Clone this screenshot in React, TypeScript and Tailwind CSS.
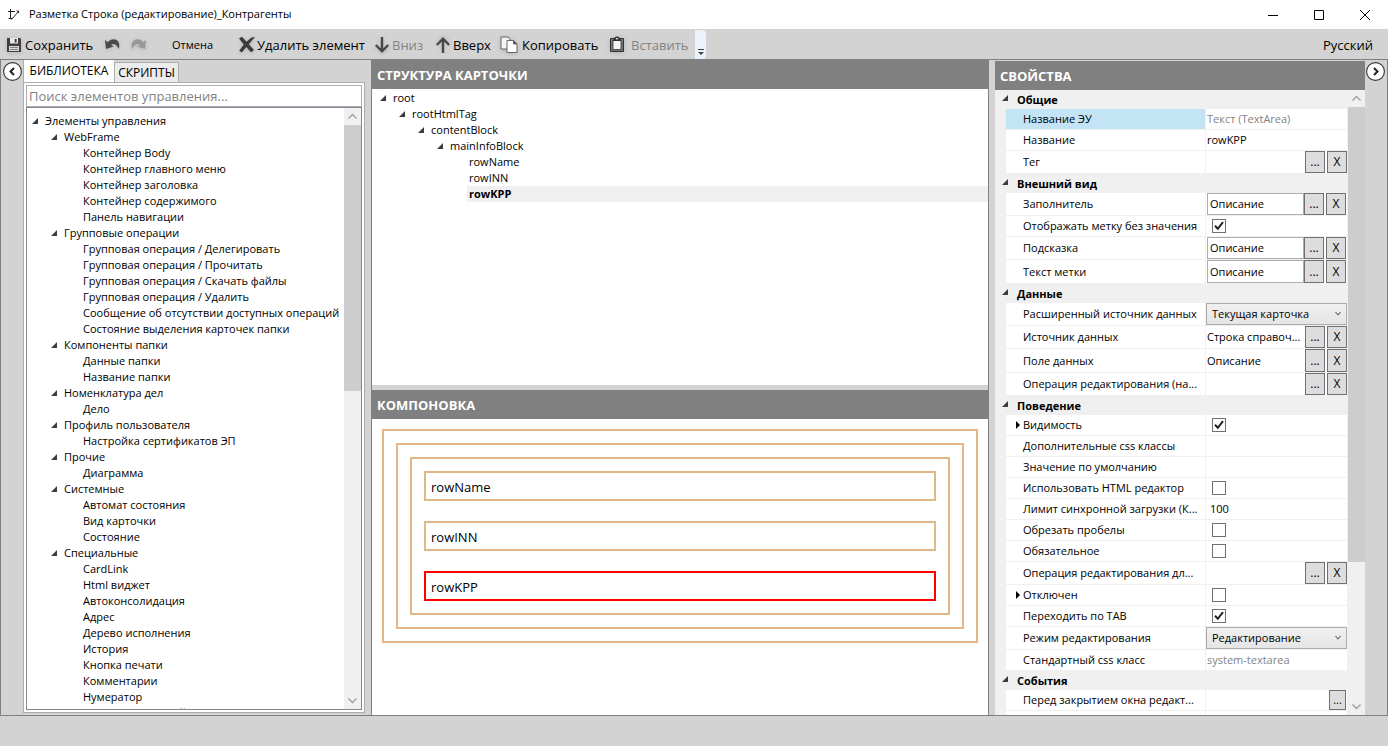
import React from 'react';

interface TreeItem {
  label: string;
  children?: TreeItem[];
  selected?: boolean;
}

type Kind = 'muted' | 'text' | 'number' | 'picker' | 'boxPicker' | 'check' | 'select' | 'event' | 'none';

interface Prop {
  label: string;
  kind: Kind;
  value?: string;
  checked?: boolean;
  active?: boolean;
  expandable?: boolean;
  size?: 'md' | 'lg' | 'xl';
}

const leafs = (...labels: string[]): TreeItem[] => labels.map((label) => ({ label }));

const library: TreeItem[] = [
  {
    label: 'Элементы управления',
    children: [
      {
        label: 'WebFrame',
        children: leafs('Контейнер Body', 'Контейнер главного меню', 'Контейнер заголовка', 'Контейнер содержимого', 'Панель навигации'),
      },
      {
        label: 'Групповые операции',
        children: leafs(
          'Групповая операция / Делегировать',
          'Групповая операция / Прочитать',
          'Групповая операция / Скачать файлы',
          'Групповая операция / Удалить',
          'Сообщение об отсутствии доступных операций',
          'Состояние выделения карточек папки',
        ),
      },
      { label: 'Компоненты папки', children: leafs('Данные папки', 'Название папки') },
      { label: 'Номенклатура дел', children: leafs('Дело') },
      { label: 'Профиль пользователя', children: leafs('Настройка сертификатов ЭП') },
      { label: 'Прочие', children: leafs('Диаграмма') },
      { label: 'Системные', children: leafs('Автомат состояния', 'Вид карточки', 'Состояние') },
      {
        label: 'Специальные',
        children: leafs(
          'CardLink',
          'Html виджет',
          'Автоконсолидация',
          'Адрес',
          'Дерево исполнения',
          'История',
          'Кнопка печати',
          'Комментарии',
          'Нумератор',
          'Предпросмотр файла',
        ),
      },
    ],
  },
];

const structure: TreeItem[] = [
  {
    label: 'root',
    children: [
      {
        label: 'rootHtmlTag',
        children: [
          {
            label: 'contentBlock',
            children: [
              {
                label: 'mainInfoBlock',
                children: [{ label: 'rowName' }, { label: 'rowINN' }, { label: 'rowKPP', selected: true }],
              },
            ],
          },
        ],
      },
    ],
  },
];

const groups: { title: string; props: Prop[] }[] = [
  {
    title: 'Общие',
    props: [
      { label: 'Название ЭУ', kind: 'muted', value: 'Текст (TextArea)', active: true },
      { label: 'Название', kind: 'text', value: 'rowKPP' },
      { label: 'Тег', kind: 'picker', size: 'lg' },
    ],
  },
  {
    title: 'Внешний вид',
    props: [
      { label: 'Заполнитель', kind: 'boxPicker', value: 'Описание', size: 'lg' },
      { label: 'Отображать метку без значения', kind: 'check', checked: true },
      { label: 'Подсказка', kind: 'boxPicker', value: 'Описание', size: 'lg' },
      { label: 'Текст метки', kind: 'boxPicker', value: 'Описание', size: 'xl' },
    ],
  },
  {
    title: 'Данные',
    props: [
      { label: 'Расширенный источник данных', kind: 'select', value: 'Текущая карточка', size: 'lg' },
      { label: 'Источник данных', kind: 'picker', value: 'Строка справоч...', size: 'lg' },
      { label: 'Поле данных', kind: 'picker', value: 'Описание', size: 'xl' },
      { label: 'Операция редактирования (на...', kind: 'picker', size: 'lg' },
    ],
  },
  {
    title: 'Поведение',
    props: [
      { label: 'Видимость', kind: 'check', checked: true, expandable: true },
      { label: 'Дополнительные css классы', kind: 'text' },
      { label: 'Значение по умолчанию', kind: 'text' },
      { label: 'Использовать HTML редактор', kind: 'check' },
      { label: 'Лимит синхронной загрузки (К...', kind: 'number', value: '100' },
      { label: 'Обрезать пробелы', kind: 'check' },
      { label: 'Обязательное', kind: 'check' },
      { label: 'Операция редактирования дл...', kind: 'picker', size: 'lg' },
      { label: 'Отключен', kind: 'check', expandable: true },
      { label: 'Переходить по TAB', kind: 'check', checked: true },
      { label: 'Режим редактирования', kind: 'select', value: 'Редактирование', size: 'lg' },
      { label: 'Стандартный css класс', kind: 'muted', value: 'system-textarea' },
    ],
  },
  {
    title: 'События',
    props: [
      { label: 'Перед закрытием окна редакт...', kind: 'event' },
      { label: '', kind: 'none' },
    ],
  },
];

const rowHeight = { md: 'h-[21px]', lg: 'h-[23px]', xl: 'h-[24px]' };

const Expander = () => (
  <svg className="w-1.5 h-1.5 shrink-0" viewBox="0 0 6 6">
    <path d="M6 0V6H0Z" fill="#3c3c3c" />
  </svg>
);

const Tree: React.FC<{ items: TreeItem[]; nested?: boolean }> = ({ items, nested }) => (
  <ul className={nested ? 'pl-[19px]' : ''}>
    {items.map((item) => (
      <li key={item.label}>
        <div className="flex items-center h-4">
          <span className="flex w-[11px] shrink-0">{item.children && <Expander />}</span>
          <span
            className={`h-4 leading-4 pl-0.5 whitespace-nowrap ${item.selected ? 'grow bg-[#f0f0f0] font-bold' : ''}`}
          >
            {item.label}
          </span>
        </div>
        {item.children && <Tree items={item.children} nested />}
      </li>
    ))}
  </ul>
);

const Chevron: React.FC<{ up?: boolean }> = ({ up }) => (
  <svg className="w-[17px] h-[17px] shrink-0 bg-[#f0f0f0]" viewBox="0 0 17 17" fill="none" stroke="#a0a0a0" strokeWidth="1.4">
    <path d={up ? 'M4.5 10.5L8.5 6.5L12.5 10.5' : 'M4.5 6.5L8.5 10.5L12.5 6.5'} />
  </svg>
);

const ScrollBar: React.FC<{ thumb: string }> = ({ thumb }) => (
  <div className="flex flex-col w-[17px] shrink-0 bg-[#f0f0f0]">
    <Chevron up />
    <div className="grow min-h-0">
      <div className={`bg-[#cdcdcd] ${thumb}`} />
    </div>
    <Chevron />
  </div>
);

const PanelTitle: React.FC<{ children: React.ReactNode }> = ({ children }) => (
  <h2 className="flex items-center h-[29px] shrink-0 px-[5px] bg-[#808080] text-white text-[13px] font-bold">{children}</h2>
);

const GridButton: React.FC<{ children: string }> = ({ children }) => (
  <button className="w-5 h-full shrink-0 flex items-center justify-center border border-[#707070] bg-[#dddddd] text-[12px] leading-4">
    {children}
  </button>
);

const PropValue: React.FC<{ prop: Prop; id: string }> = ({ prop, id }) => {
  switch (prop.kind) {
    case 'check':
      return (
        <span className="relative flex w-3.5 h-3.5 ml-1.5">
          <input id={id} type="checkbox" defaultChecked={prop.checked} className="peer appearance-none w-3.5 h-3.5 border border-[#707070] bg-white" />
          <svg className="absolute inset-0 w-3.5 h-3.5 invisible peer-checked:visible pointer-events-none" viewBox="0 0 14 14" fill="none" stroke="#212121" strokeWidth="2">
            <path d="M3 6.8L5.8 9.8L11 3.2" />
          </svg>
        </span>
      );
    case 'select':
      return (
        <span className="relative flex w-full h-[22px]">
          <select id={id} className="appearance-none w-full h-full pl-[5px] border border-[#acacac] bg-linear-to-b from-[#f0f0f0] to-[#e5e5e5]">
            <option>{prop.value}</option>
          </select>
          <svg className="absolute right-1.5 top-2 w-1.5 h-1.5 pointer-events-none" viewBox="0 0 6 6" fill="none" stroke="#606060" strokeWidth="1.1">
            <path d="M0.5 1L3 4L5.5 1" />
          </svg>
        </span>
      );
    case 'picker':
      return (
        <div className="flex w-full h-full gap-0.5">
          <input id={id} defaultValue={prop.value} className="grow min-w-0 pl-px text-ellipsis" />
          <GridButton>...</GridButton>
          <GridButton>X</GridButton>
        </div>
      );
    case 'boxPicker':
      return (
        <div className="flex w-full h-full px-px">
          <input id={id} defaultValue={prop.value} className="grow min-w-0 pl-0.5 border border-[#abadb3] bg-white" />
          <div className="flex gap-0.5">
            <GridButton>...</GridButton>
            <GridButton>X</GridButton>
          </div>
        </div>
      );
    case 'event':
      return (
        <div className="flex justify-end w-full h-5 pr-px">
          <button id={id} className="flex items-center justify-center w-[17px] border border-[#707070] bg-[#dddddd] leading-4">...</button>
        </div>
      );
    case 'none':
      return null;
    default:
      return (
        <input
          id={id}
          type="text"
          readOnly={prop.kind === 'muted'}
          defaultValue={prop.value}
          className={`w-full ${prop.kind === 'muted' ? 'text-[#838383]' : ''} ${prop.kind === 'number' ? 'pl-1' : 'pl-px'}`}
        />
      );
  }
};

const PropRow: React.FC<{ prop: Prop; id: string }> = ({ prop, id }) => (
  <div className={`flex ml-[11px] mr-px bg-white ${rowHeight[prop.size ?? 'md']}`}>
    <div className={`flex items-center w-[200px] shrink-0 border-b border-r border-[#f0f0f0] ${prop.active ? 'bg-[#c3e4f5]' : ''}`}>
      <span className="flex w-[17px] shrink-0 justify-center">
        {prop.expandable && (
          <svg className="w-1 h-2 ml-1.5" viewBox="0 0 4 8">
            <path d="M0 0L4 4L0 8Z" fill="#000" />
          </svg>
        )}
      </span>
      <label htmlFor={id} className="whitespace-nowrap">{prop.label}</label>
    </div>
    <div className="flex items-center grow min-w-0 border-b border-[#f0f0f0]">
      <PropValue prop={prop} id={id} />
    </div>
  </div>
);

const ToolButton: React.FC<{ icon: React.ReactNode; label: string; width: string; disabled?: boolean }> = ({ icon, label, width, disabled }) => (
  <button disabled={disabled} className={`flex items-center shrink-0 h-full whitespace-nowrap text-[13px] disabled:text-[#838383] ${width}`}>
    {icon}
    {label}
  </button>
);

const SaveIcon = () => (
  <svg className="w-4 h-4 mr-[3px] drop-shadow-sm" viewBox="0 0 16 16">
    <path d="M1 1H14L15 2V15H1Z" fill="#3f3f3f" />
    <path d="M4 1H12V6.5H4Z" fill="#e8e8e8" />
    <path d="M8.7 2H10.6V5.5H8.7Z" fill="#3f3f3f" />
    <path d="M3 9H13V14H3Z" fill="#dcdcdc" />
    <path d="M4 10.5H12M4 12.5H12" stroke="#808080" />
  </svg>
);

const UndoIcon: React.FC<{ redo?: boolean }> = ({ redo }) => (
  <svg className={`w-[17px] h-3.5 drop-shadow-sm ${redo ? '-scale-x-100' : ''}`} viewBox="0 0 17 14">
    <path d="M1 2L2 11L9.5 8.5L7 6.8C9.5 4.8 13 6 14.5 11C16.8 6 14 1 9.5 1.2C7 1.3 5 2.6 4 4.2Z" fill={redo ? '#989898' : '#4a4a4a'} />
  </svg>
);

const DeleteIcon = () => (
  <svg className="w-[18px] h-[18px] mr-px drop-shadow-sm" viewBox="0 0 18 18">
    <path d="M1 2.5L4 0.8L8.5 5.8L13.5 1.5L17 1L10.8 8.3L16 14L13 16.2L8.3 11L3.8 16.4L1.2 14.8L5.8 8.5Z" fill="#3a3a3a" />
  </svg>
);

const ArrowIcon: React.FC<{ up?: boolean }> = ({ up }) => (
  <svg className={`w-4 h-[18px] mr-0.5 drop-shadow-sm ${up ? 'rotate-180' : ''}`} viewBox="0 0 16 18" fill="none" stroke="#484848" strokeWidth="2.4">
    <path d="M8 1V15M1.8 9L8 15.3L14.2 9" />
  </svg>
);

const CopyIcon = () => (
  <svg className="w-[19px] h-[18px] mr-[3px] drop-shadow-sm" viewBox="0 0 19 18" stroke="#5a5a5a" strokeWidth="0.9">
    <path d="M1 1H8L10 3V13H1Z" fill="#f4f4f4" />
    <path d="M7 4.5H13.5L17 8V16.5H7Z" fill="#fff" />
    <path d="M13.5 4.5V8H17Z" fill="#666" />
  </svg>
);

const PasteIcon = () => (
  <svg className="w-4 h-[18px] mr-1.5 drop-shadow-sm" viewBox="0 0 16 18">
    <path d="M1.5 2.5H14.5V15.5H1.5Z" fill="#777" stroke="#333" />
    <path d="M4 4.5H12V13.5H4Z" fill="#f4f4f4" stroke="#333" strokeWidth="0.8" />
    <path d="M5 2.5Q5.5 0.5 8 0.5Q10.5 0.5 11 2.5L12 5H4Z" fill="#2c2c2c" />
    <path d="M6.8 2H9.2V3.4H6.8Z" fill="#ddd" />
  </svg>
);

const SideToggle: React.FC<{ right?: boolean }> = ({ right }) => (
  <button aria-label={right ? 'Скрыть свойства' : 'Скрыть библиотеку'} className="w-[19px] h-[19px] shrink-0">
    <svg className={`w-[19px] h-[19px] ${right ? 'rotate-180' : ''}`} viewBox="0 0 19 19" fill="none">
      <circle cx="9.5" cy="9.5" r="8.9" fill="#fff" stroke="#333" strokeWidth="1.1" />
      <path d="M11 6L7.5 9.5L11 13" stroke="#222" strokeWidth="2" />
    </svg>
  </button>
);

const TitleBar = () => (
  <header className="flex items-center h-[29px] shrink-0 bg-white">
    <svg className="w-3 h-3 ml-2 mr-[9px]" viewBox="0 0 12 12" fill="none" stroke="#222">
      <path d="M0 2.5H7M2.5 0V9.5M0.5 9.5H4M3.5 10.5L10.5 2.5" />
      <path d="M10.5 4V2H8.5" />
    </svg>
    <h1 className="pb-0.5">Разметка Строка (редактирование)_Контрагенты</h1>
    <div className="flex ml-auto">
      <button aria-label="Свернуть" className="flex justify-center w-[46px]">
        <svg className="w-2.5 h-2.5" viewBox="0 0 10 10" stroke="#000"><path d="M0 5.5H10" /></svg>
      </button>
      <button aria-label="Развернуть" className="flex justify-center w-[46px]">
        <svg className="w-2.5 h-2.5" viewBox="0 0 10 10" fill="none" stroke="#000"><path d="M0.5 0.5H9.5V9.5H0.5Z" /></svg>
      </button>
      <button aria-label="Закрыть" className="flex justify-center w-[46px]">
        <svg className="w-2.5 h-2.5" viewBox="0 0 10 10" stroke="#000"><path d="M0 0L10 10M10 0L0 10" /></svg>
      </button>
    </div>
  </header>
);

const ToolBar = () => (
  <div className="flex items-center h-[31px] shrink-0 pl-1.5 pt-px border-b border-[#808080]">
    <ToolButton icon={<SaveIcon />} label="Сохранить" width="w-[98px]" />
    <button aria-label="Отменить действие" className="w-[26px]"><UndoIcon /></button>
    <button aria-label="Повторить действие" className="w-[42px]"><UndoIcon redo /></button>
    <button className="w-[66px] text-left">Отмена</button>
    <ToolButton icon={<DeleteIcon />} label="Удалить элемент" width="w-[136px]" />
    <ToolButton icon={<ArrowIcon />} label="Вниз" width="w-[61px]" disabled />
    <ToolButton icon={<ArrowIcon up />} label="Вверх" width="w-[65px]" />
    <ToolButton icon={<CopyIcon />} label="Копировать" width="w-[109px]" />
    <ToolButton icon={<PasteIcon />} label="Вставить" width="w-[86px]" disabled />
    <button aria-label="Параметры панели" className="flex items-end justify-center w-[11px] h-[29px] pb-1 rounded-r-sm bg-[#eaf3fc]">
      <svg className="w-1.5 h-1.5" viewBox="0 0 6 6"><path d="M0 0H6V1H0ZM0 3H6L3 6Z" fill="#444" /></svg>
    </button>
    <button className="ml-auto mr-[15px] text-[13px]">Русский</button>
  </div>
);

const LibraryPanel = () => (
  <section className="flex flex-col w-[342px] shrink-0 pt-px pb-0.5">
    <div className="flex items-end h-[21px] shrink-0">
      <button className="w-[91px] h-[22px] z-10 bg-white text-[12px] border-l border-[#acacac]">БИБЛИОТЕКА</button>
      <button className="w-[65px] h-5 border border-b-0 border-[#acacac] bg-[#ececec] text-[12px]">СКРИПТЫ</button>
    </div>
    <div className="flex flex-col grow min-h-0 p-0.5 border border-[#acacac] bg-white">
      <input
        type="text"
        aria-label="Поиск элементов управления"
        placeholder="Поиск элементов управления..."
        className="h-[22px] shrink-0 px-0.5 border border-[#abadb3] text-[13px] placeholder:text-[#838383]"
      />
      <div className="flex grow min-h-0 border border-[#828790]">
        <div className="grow min-w-0 pl-[5px] pt-[5px] overflow-hidden">
          <Tree items={library} />
        </div>
        <ScrollBar thumb="h-[47%]" />
      </div>
    </div>
  </section>
);

const LayoutRow: React.FC<{ name: string; selected?: boolean }> = ({ name, selected }) => (
  <div className={`flex items-center h-[30px] px-[5px] pt-0.5 border-2 text-[13px] ${selected ? 'border-[#ff0000]' : 'border-[#deb887]'}`}>{name}</div>
);

const Center = () => (
  <main className="flex flex-col grow min-w-0 border-x border-[#808080] bg-white">
    <PanelTitle>СТРУКТУРА КАРТОЧКИ</PanelTitle>
    <div className="h-[296px] shrink-0 pl-2 pt-px">
      <Tree items={structure} />
    </div>
    <div className="h-[5px] shrink-0 bg-[#d3d3d3]" />
    <PanelTitle>КОМПОНОВКА</PanelTitle>
    <div className="px-2.5 pt-2.5">
      <div className="p-3 border-2 border-[#deb887]">
        <div className="p-3 border-2 border-[#deb887]">
          <div className="flex flex-col gap-5 p-3 border-2 border-[#deb887]">
            <LayoutRow name="rowName" />
            <LayoutRow name="rowINN" />
            <LayoutRow name="rowKPP" selected />
          </div>
        </div>
      </div>
    </div>
  </main>
);

const PropertiesPanel = () => (
  <section className="flex flex-col w-[370px] shrink-0 pt-px">
    <PanelTitle>СВОЙСТВА</PanelTitle>
    <div className="flex grow min-h-0 bg-[#f0f0f0]">
      <div className="grow min-w-0 overflow-hidden">
        {groups.map((group, g) => (
          <div key={group.title}>
            <h3 className="flex items-center h-[19px] pl-[7px] font-bold">
              <span className="mb-1"><Expander /></span>
              <span className="pl-[9px]">{group.title}</span>
            </h3>
            {group.props.map((prop, i) => (
              <PropRow key={prop.label} prop={prop} id={`prop-${g}-${i}`} />
            ))}
          </div>
        ))}
      </div>
      <ScrollBar thumb="h-[77%]" />
    </div>
  </section>
);

const App: React.FC = () => (
  <div className="flex flex-col h-screen overflow-hidden bg-[#d3d3d3] text-black text-[11px] leading-4 font-['Open_Sans','Noto_Sans',sans-serif]">
    <TitleBar />
    <ToolBar />
    <div className="flex grow min-h-0 border-x border-[#808080]">
      <div className="w-[22px] shrink-0 pl-0.5 pt-0.5"><SideToggle /></div>
      <LibraryPanel />
      <div className="w-1.5 shrink-0" />
      <Center />
      <div className="w-1.5 shrink-0" />
      <PropertiesPanel />
      <div className="w-[22px] shrink-0 pl-px pt-0.5"><SideToggle right /></div>
    </div>
    <footer className="h-[31px] shrink-0 border-t border-[#808080]" />
  </div>
);

export default App;
